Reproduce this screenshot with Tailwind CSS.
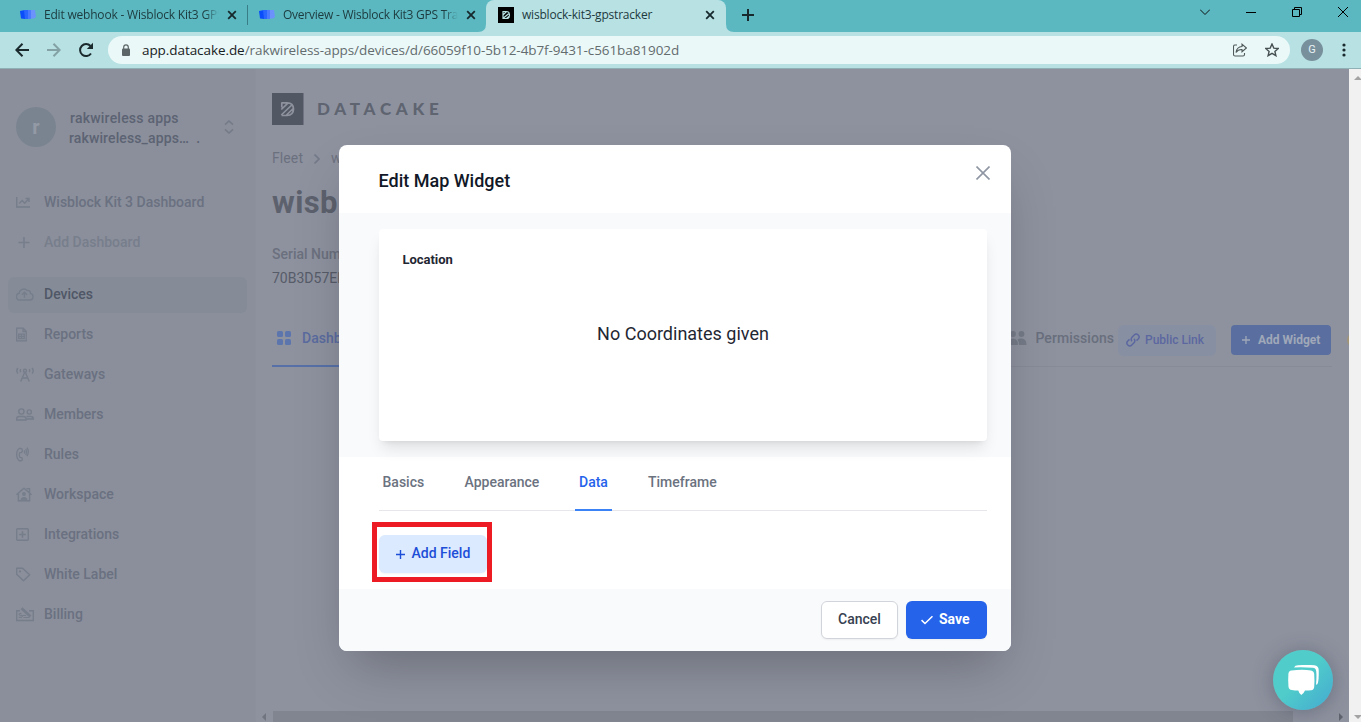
<!DOCTYPE html>
<html lang="en">
<head>
<meta charset="utf-8">
<title>wisblock-kit3-gpstracker</title>
<script src="https://cdn.jsdelivr.net/npm/@tailwindcss/browser@4"></script>
</head>
<body class="h-[722px] w-[1361px] overflow-hidden flex flex-col font-['Roboto',sans-serif] bg-[#8e929f]">

<!-- Tab strip -->
<header class="flex h-8 shrink-0 bg-[#5bb8c1] font-['Open_Sans',sans-serif] text-xs text-[#1d3a3e]">
  <div class="flex w-[247px] items-center pl-5 pb-0.5">
    <svg class="h-4 w-4 shrink-0" viewBox="0 0 16 16"><path d="M0 4l5-1v9l-4-.5z" fill="#0a4dfb"/><path d="M4 3h4v9H5z" fill="#2a67ff"/><path d="M8 3h3v9H8z" fill="#4b7cff"/><path d="M11 3h4l1 7-2 1.500h-3z" fill="#6c92fb"/></svg>
    <span class="ml-2 w-[175px] overflow-hidden whitespace-nowrap tracking-[-0.2px] mask-r-from-92%">Edit webhook - Wisblock Kit3 GPS</span>
    <svg class="ml-2 h-2.5 w-2.5 shrink-0" viewBox="0 0 10 10" stroke="#17292c" stroke-width="1.800"><path d="M1.200 1.200l7.600 7.600M8.800 1.200L1.200 8.800"/></svg>
  </div>
  <div class="mt-[5px] h-5 w-px bg-[#397e86]"></div>
  <div class="flex w-[238px] items-center pl-[11px] pb-0.5">
    <svg class="h-4 w-4 shrink-0" viewBox="0 0 16 16"><path d="M0 4l5-1v9l-4-.5z" fill="#0a4dfb"/><path d="M4 3h4v9H5z" fill="#2a67ff"/><path d="M8 3h3v9H8z" fill="#4b7cff"/><path d="M11 3h4l1 7-2 1.500h-3z" fill="#6c92fb"/></svg>
    <span class="ml-2 w-[175px] overflow-hidden whitespace-nowrap tracking-[-0.25px] mask-r-from-92%">Overview - Wisblock Kit3 GPS Tra</span>
    <svg class="ml-2 h-2.5 w-2.5 shrink-0" viewBox="0 0 10 10" stroke="#17292c" stroke-width="1.800"><path d="M1.200 1.200l7.600 7.600M8.800 1.200L1.200 8.800"/></svg>
  </div>
  <div class="relative flex w-[240px] items-center rounded-t-lg bg-[#b8e1e4] pl-3 pb-0.5">
    <svg class="absolute -left-2 bottom-0 h-2 w-2" viewBox="0 0 8 8"><path d="M8 0v8H0q8 0 8-8z" fill="#b8e1e4"/></svg>
    <svg class="absolute -right-2 bottom-0 h-2 w-2" viewBox="0 0 8 8"><path d="M0 0v8h8q-8 0-8-8z" fill="#b8e1e4"/></svg>
    <svg class="h-4 w-4 shrink-0" viewBox="0 0 16 16" fill="none" stroke="#b8e1e4"><path d="M0 0h16v16H0z" fill="#000" stroke="none"/><path d="M5 4.500h3.500q3 0 3 3.500t-3 3.500H5zM5 8l3.500-3.500M5.500 11l6-5M8.500 11.500L11.500 9" stroke-width="1.200"/></svg>
    <span class="ml-2 w-[175px] whitespace-nowrap tracking-[-0.2px]">wisblock-kit3-gpstracker</span>
    <svg class="ml-2 h-2.5 w-2.5 shrink-0" viewBox="0 0 10 10" stroke="#17292c" stroke-width="1.800"><path d="M1.200 1.200l7.600 7.600M8.800 1.200L1.200 8.800"/></svg>
  </div>
  <svg class="ml-4 mt-[9px] h-3 w-3" viewBox="0 0 12 12" stroke="#17292c" stroke-width="2"><path d="M0 6h12M6 0v12"/></svg>
  <div class="ml-auto flex h-[24px] items-center gap-9 pr-[13px]">
    <svg class="h-2.5 w-2.5" viewBox="0 0 10 10" fill="none" stroke="#111"><path d="M0 2.500l5 5 5-5"/></svg>
    <svg class="h-2.5 w-2.5" viewBox="0 0 10 10" fill="none" stroke="#000"><path d="M0 5.500h10"/></svg>
    <svg class="h-2.5 w-2.5" viewBox="0 0 10 10" fill="none" stroke="#000"><path d="M.5 2.500h7v7h-7zM2.500 2.500v-2h7v7h-2"/></svg>
    <svg class="h-2.5 w-2.5" viewBox="0 0 10 10" fill="none" stroke="#000"><path d="M0 0l10 10M10 0L0 10"/></svg>
  </div>
</header>

<!-- Toolbar -->
<div class="flex h-[37px] shrink-0 items-center border-b border-[#8fb0b5] bg-[#b8e1e4] pl-[15px]">
  <svg class="h-3.5 w-3.5" viewBox="0 0 14 14" fill="none" stroke="#1b2a2d" stroke-width="2"><path d="M14 7H1.500M7.500.7L1.300 7l6.200 6.300"/></svg>
  <svg class="ml-[18px] h-3.5 w-3.5" viewBox="0 0 14 14" fill="none" stroke="#84a2a5" stroke-width="2"><path d="M0 7h12.500M6.500.7L12.700 7l-6.200 6.300"/></svg>
  <svg class="ml-[17px] h-4 w-4" viewBox="0 0 16 16"><path d="M13 11.500A6 6 0 1 1 12.500 4" fill="none" stroke="#1b2a2d" stroke-width="2"/><path d="M15 .8V7H8.800z" fill="#1b2a2d"/></svg>
  <div class="ml-3.5 flex h-7 w-[1182px] items-center rounded-full bg-[#ebf8f8] pl-3.5">
    <svg class="h-3 w-2" viewBox="0 0 8 12"><rect y="4.500" width="8" height="7.500" rx="1" fill="#5b6567"/><path d="M1.700 5V3.200a2.300 2.300 0 0 1 4.600 0V5" fill="none" stroke="#5b6567" stroke-width="1.200"/></svg>
    <span class="ml-3 whitespace-nowrap font-['Open_Sans',sans-serif] text-[13.500px] tracking-[-0.07px] text-[#636c6e]"><span class="text-[#172123]">app.datacake.de</span>/rakwireless-apps/devices/d/66059f10-5b12-4b7f-9431-c561ba81902d</span>
    <svg class="ml-auto h-3.5 w-3.5" viewBox="0 0 14 14" fill="none" stroke="#50595b" stroke-width="1.100"><path d="M4 2H2q-1.500 0-1.500 1.500v8Q.5 13 2 13h8q1.500 0 1.500-1.500V10"/><path d="M9 1.200L13.400 5 9 8.700V6.500Q5 6.300 3 9.500 3.700 4 9 3.500z"/></svg>
    <svg class="ml-[18px] mr-[11px] h-3.5 w-3.5" viewBox="0 0 14 14" fill="none" stroke="#465052" stroke-width="1.400"><path d="M7 1l1.800 4.100 4.400.4-3.300 2.900 1 4.300L7 10.400l-3.900 2.300 1-4.300L.8 5.500l4.400-.4z"/></svg>
  </div>
  <div class="ml-[11px] flex h-[22px] w-[22px] items-center justify-center rounded-full bg-[#78909c] text-[11px] text-[#e9f2f4]">G</div>
  <svg class="ml-[19px] h-3.5 w-1" viewBox="0 0 4 14" fill="#1b2a2d"><circle cx="2" cy="2" r="1.600"/><circle cx="2" cy="7" r="1.600"/><circle cx="2" cy="12" r="1.600"/></svg>
</div>

<!-- Page viewport -->
<div class="flex h-[653px]">
  <div class="relative flex w-[1349px] overflow-hidden">

    <!-- Sidebar -->
    <aside class="flex w-64 shrink-0 flex-col border-r border-[#8c909d] bg-[#8b8f9b] px-2 pt-[38px] text-sm font-medium text-[#6a7181]">
      <div class="flex h-10 items-center pl-2">
        <div class="flex h-10 w-10 items-center justify-center rounded-full bg-[#7a8491] text-xl font-bold text-[#949aa5]">r</div>
        <div class="ml-3.5 mt-0.5 w-[132px] whitespace-nowrap leading-5 text-[#5c6373]">
          <div class="tracking-[0.22px]">rakwireless apps</div>
          <div class="-ml-px tracking-[0.12px]">rakwireless_apps… &nbsp;.</div>
        </div>
        <svg class="ml-[21px] h-3.5 w-3" viewBox="0 0 12 14" fill="none" stroke="#757b89" stroke-width="1.600"><path d="M2 4.700l4-3.700 4 3.700M2 9.300L6 13l4-3.700"/></svg>
      </div>
      <nav class="mt-[37px] flex flex-col gap-1">
        <a class="flex h-9 items-center pl-2"><span class="w-7 text-[#767d8b]"><svg class="h-4 w-4" viewBox="0 0 16 16" fill="none" stroke="currentColor" stroke-width="1.400"><path d="M.7 3v10H14M3.200 9.500l3-3 2.500 2.800 4-4.500M9.500 4.500H13V8"/></svg></span>Wisblock Kit 3 Dashboard</a>
        <a class="flex h-9 items-center pl-2 text-[#777e8c]"><span class="w-7"><svg class="h-4 w-4" viewBox="0 0 16 16" fill="none" stroke="currentColor" stroke-width="1.600"><path d="M2.500 8.500h11M8 3v11"/></svg></span>Add Dashboard</a>
      </nav>
      <nav class="mt-4 flex flex-col gap-1">
        <a class="flex h-9 items-center"><span class="mt-px flex h-9 grow items-center rounded-md bg-[#858c98] pb-0.5 pl-2 text-[#505766]"><span class="w-7 text-[#767d8b]"><svg class="h-[18px] w-[18px]" viewBox="0 0 18 18" fill="none" stroke="currentColor" stroke-width="1.400"><path d="M4.500 15h9.300a3.300 3.300 0 0 0 .7-6.500 2.800 2.800 0 0 0-3.400-3A4.600 4.600 0 0 0 3.200 8.300 3.400 3.400 0 0 0 4.500 15zM8.500 12.700V7.500M6 9.800l2.500-2.500L11 9.800"/></svg></span>Devices</span></a>
        <a class="flex h-9 items-center pl-2"><span class="w-7 text-[#767d8b]"><svg class="h-4 w-[18px]" viewBox="0 0 18 16" fill="none" stroke="currentColor" stroke-width="1.300"><path d="M.7 2.200h6.500l3 3v9.600H.7zM7 2v3.500h3M2.700 8.200h5.600v4.500H2.700zM2.700 10.500h5.600M5.500 8v4.700"/></svg></span>Reports</a>
        <a class="flex h-9 items-center pl-2"><span class="w-7 text-[#767d8b]"><svg class="h-4 w-[18px]" viewBox="0 0 18 16" fill="none" stroke="currentColor" stroke-width="1.400"><path d="M1.900 2q-2.200 2.700 0 5.500M16.100 2q2.200 2.700 0 5.500M4.800 3.200q-1 1.500 0 3M13.200 3.200q1 1.500 0 3M8.600 6.500L4.700 15.500M9.400 6.500l3.900 9M6.300 12h5.400"/><circle cx="9" cy="4.800" r="1.500"/></svg></span>Gateways</a>
        <a class="flex h-9 items-center pl-2"><span class="w-7 text-[#767d8b]"><svg class="h-4 w-[18px]" viewBox="0 0 18 16" fill="none" stroke="currentColor" stroke-width="1.400"><circle cx="5.400" cy="5.500" r="2.600"/><circle cx="13.300" cy="6" r="2.100"/><path d="M.7 14v-1.200q0-2.300 2.500-2.300h4.400q2.400 0 2.400 2.300V14zM10.500 10.500h4.300q2.500 0 2.500 2.500H10.500"/></svg></span>Members</a>
        <a class="flex h-9 items-center pl-2"><span class="w-7 text-[#767d8b]"><svg class="h-4 w-[18px]" viewBox="0 0 18 16" fill="none" stroke="currentColor" stroke-width="1.300"><path d="M3.500 2.300Q.7 4 .7 8.500t3 6.500l2.300-.5q.7-1.500-.2-3l-2-.2q-1-2.500 0-4.800l1.900-.2q1.200-1.700.2-3.500zM8.200 4.300q1 1.600 0 3.200M9.800 3q1.500 3 0 6M11 1.700q2.600 4.200 0 8.400"/></svg></span>Rules</a>
        <a class="flex h-9 items-center pl-2"><span class="w-7 text-[#767d8b]"><svg class="h-4 w-[18px]" viewBox="0 0 18 16" fill="none" stroke="currentColor" stroke-width="1.400"><path d="M.5 8.800L8 2.200l7.500 6.600M2.400 7.500v7.300h11.200V7.500M10.500 2.600h3v3.800"/><circle cx="8" cy="8" r="1.900" fill="currentColor" stroke="none"/><path d="M4.500 15q0-4 3.500-4t3.500 4z" fill="currentColor" stroke="none"/></svg></span>Workspace</a>
        <a class="flex h-9 items-center pl-2"><span class="w-7 text-[#767d8b]"><svg class="h-4 w-[18px]" viewBox="0 0 18 16" fill="none" stroke="currentColor" stroke-width="1.400"><rect x=".7" y="2.700" width="11.600" height="11.600" rx="1"/><path d="M6.500 5.200v6.600M3.200 8.500h6.600" stroke-width="1.600"/></svg></span>Integrations</a>
        <a class="flex h-9 items-center pl-2"><span class="w-7 text-[#767d8b]"><svg class="h-4 w-[18px]" viewBox="0 0 18 16" fill="none" stroke="currentColor" stroke-width="1.400"><path d="M.7 2.300h5.800l7.200 6.400-6.200 6.100L.7 8.300z" stroke-linejoin="round"/><circle cx="4" cy="5.400" r="1.100" fill="currentColor" stroke="none"/></svg></span>White Label</a>
        <a class="flex h-9 items-center pl-2"><span class="w-7 text-[#767d8b]"><svg class="h-4 w-[18px]" viewBox="0 0 18 16" fill="none" stroke="currentColor" stroke-width="1.400"><path d="M4 4.800H.7v9.700h16.600V4.800H13"/><path d="M5.500 2.200l9 8.300" stroke-width="2.800"/><path d="M5.500 7.500q-2.500-.5-2.500.7t2.300 1.200 0 2H2.800M7 9.500h3M7.500 11.500h6" stroke-width="1.100"/></svg></span>Billing</a>
      </nav>
    </aside>

    <!-- Device page -->
    <main class="flex grow flex-col bg-[#8e929f]">
      <div class="flex grow flex-col pl-4 pt-6">
        <div class="flex h-8 items-center">
          <svg class="h-8 w-8" viewBox="0 0 32 32"><path d="M0 0h31.500v32H0z" fill="#525764"/><g fill="none" stroke="#8e929f" stroke-width="1.700"><path d="M9.500 9.800h5.500q6.500 0 6.500 6.200T15 22.500H9.500M9.300 16.500l6.300-6.200M9.300 22l10.500-10M14.500 22l6.700-6.500M9.800 9.500v5"/></g></svg>
          <span class="-mt-px ml-[13px] font-['Lato',sans-serif] text-[17px] font-black leading-none tracking-[4.750px] text-[#5f6471]">DATACAKE</span>
        </div>
        <div class="mt-[23px] flex h-5 items-center text-sm tracking-[0.1px] text-[#6b707e]">Fleet
          <svg class="mx-2.5 mt-px h-3 w-2" viewBox="0 0 8 12" fill="none" stroke="#747987" stroke-width="1.700"><path d="M1.500 1.500L6 6l-4.500 4.500"/></svg>wi</div>
        <h1 class="mt-[17px] text-[31px] font-bold leading-9 tracking-[0.4px] text-[#5c616d]">wisb</h1>
        <div class="mt-[23px] text-sm font-medium leading-5 text-[#6b707e]">Serial Num</div>
        <div class="mt-1 text-sm leading-5 text-[#575c69]">70B3D57ED</div>
        <div class="mr-[17px] mt-[34px] flex h-[45px] border-b border-[#878b98]">
          <div class="flex h-[45px] w-[104px] items-start border-b-2 border-[#5771a8] pl-[5px] pt-1.5 text-sm font-medium text-[#5a6b9f]">
            <svg class="mt-[3px] h-3.5 w-3.5" viewBox="0 0 14 14" fill="#5c76ad"><rect width="6" height="6" rx="1.500"/><rect x="8" width="6" height="6" rx="1.500"/><rect y="8" width="6" height="6" rx="1.500"/><rect x="8" y="8" width="6" height="6" rx="1.500"/></svg>
            <span class="ml-[11px]">Dashb</span>
          </div>
          <div class="ml-auto flex items-start">
            <svg class="mt-2 h-4 w-[19px]" viewBox="0 0 19 16" fill="#757b88"><circle cx="5" cy="4" r="2.900"/><circle cx="13.500" cy="4" r="2.900"/><path d="M0 15q0-6.500 5-6.500t5 6.500zM11 15q0-3.500-1.500-5.500 1-1 4-1 5 0 5 6.500z"/></svg>
            <span class="ml-2 mt-1.5 text-sm font-medium tracking-[0.05px] text-[#696f7d]">Permissions</span>
            <div class="ml-1 mt-[3px] flex h-[31px] w-[98px] items-center rounded-md bg-[#8790a2] pb-px pl-2 text-xs font-medium text-[#5c67a0]">
              <svg class="mr-[5px] h-3.5 w-3.5" viewBox="0 0 14 14" fill="none" stroke="#5c67a0" stroke-width="1.500"><path d="M6 8.200a2.800 2.800 0 0 1 0-4L8.200 2a2.800 2.800 0 0 1 4 4L10.500 7.600M8 5.800a2.800 2.800 0 0 1 0 4L5.800 12a2.800 2.800 0 0 1-4-4L3.500 6.400"/></svg>Public Link</div>
            <div class="ml-[15px] mt-[3px] flex h-[30px] w-[100px] items-center rounded bg-[#5a6f9f] pl-[11px] text-xs font-bold text-[#a0a8b9]">
              <svg class="mr-2 h-2 w-2" viewBox="0 0 8 8" stroke="#a0a8b9" stroke-width="1.300"><path d="M0 4h8M4 0v8"/></svg>Add Widget</div>
            <div class="-mr-[33px] ml-4 mt-2.5 h-4 w-[18px] shrink-0 rounded-full bg-[#a29476]"></div>
          </div>
        </div>
      </div>
      <!-- Horizontal scrollbar -->
      <div class="flex h-[11px] items-center px-[6px]">
        <svg class="h-2 w-1" viewBox="0 0 4 8" fill="#71757f"><path d="M4 0v8L0 4z"/></svg>
        <div class="ml-[7px] h-[11px] w-[1020px] bg-[#818590]"></div>
        <svg class="ml-auto h-2 w-1" viewBox="0 0 4 8" fill="#5f636d"><path d="M0 0v8l4-4z"/></svg>
      </div>
    </main>

    <!-- Edit Map Widget dialog -->
    <div class="absolute inset-0 flex items-start pl-[339px] pt-[76px]">
      <section class="flex h-[506px] w-[672px] flex-col overflow-hidden rounded-lg bg-white shadow-2xl">
        <div class="flex h-[68px] shrink-0 items-start justify-between pl-[39.500px] pr-[21px]">
          <h2 class="mt-[22px] text-lg font-medium leading-7 text-[#111827]">Edit Map Widget</h2>
          <svg class="mt-[21px] h-3.5 w-3.5" viewBox="0 0 14 14" stroke="#8f96a3" stroke-width="1.600"><path d="M.5.5l13 13M13.500.5l-13 13"/></svg>
        </div>
        <div class="h-[244px] shrink-0 bg-[#f9fafb] pl-10 pr-6 pt-4">
          <div class="flex h-[212px] flex-col rounded bg-white shadow-lg">
            <h3 class="ml-[23.500px] mt-[21px] text-[13px] font-bold leading-5 tracking-[-0.05px] text-[#1f2733]">Location</h3>
            <p class="mt-[50px] text-center text-lg leading-7 text-[#1f2733]">No Coordinates given</p>
          </div>
        </div>
        <div class="ml-10 mr-6 flex h-[54px] shrink-0 border-b border-[#e5e7eb] text-sm font-medium text-[#6b7280]">
          <span class="w-[82px] pl-[3.500px] pt-[15px]">Basics</span>
          <span class="w-[114px] pl-[3.500px] pt-[15px]">Appearance</span>
          <span class="-mb-px w-[37px] border-b-2 border-[#3b82f6] pl-1 pt-[15px] text-[#2563eb]">Data</span>
          <span class="ml-8 pl-1 pt-[15px]">Timeframe</span>
        </div>
        <div class="flex h-[78px] shrink-0 pl-[33px] pt-[11px]">
          <div class="h-[60px] w-[120px] border-[5px] border-[#ed1c24] pl-0.5 pt-2">
            <button class="flex h-[38px] w-[108px] items-center rounded-md bg-[#dbeafe] pb-0.5 pl-[17px] text-sm font-medium text-[#1d4ed8] shadow-xs">
              <svg class="mr-[6.500px] mt-0.5 h-[9px] w-[9px]" viewBox="0 0 9 9" stroke="#1d4ed8" stroke-width="1.400"><path d="M0 4.500h9M4.500 0v9"/></svg>Add Field</button>
          </div>
        </div>
        <div class="flex grow justify-end gap-2 bg-[#f9fafb] pr-6 pt-3">
          <button class="h-[38px] w-[77px] rounded-md border border-[#d1d5db] bg-white pb-0.5 text-sm font-medium text-[#374151] shadow-xs">Cancel</button>
          <button class="flex h-[38px] w-[81px] items-center rounded-md bg-[#2563eb] pb-0.5 pl-[15px] text-sm font-bold text-white shadow-xs">
            <svg class="mr-1.5 mt-0.5 h-3 w-3" viewBox="0 0 12 12" fill="none" stroke="#fff" stroke-width="1.600"><path d="M.5 6.200L4 9.500l7.500-7.300"/></svg>Save</button>
        </div>
      </section>
    </div>

    <!-- Chat launcher -->
    <div class="absolute bottom-3 right-4 flex h-[60px] w-[60px] items-center justify-center rounded-full bg-linear-to-br from-[#50cdca] from-45% to-[#45a9d0] shadow-[0_2px_20px_rgba(40,50,70,0.35)]">
      <svg class="h-[30px] w-8" viewBox="0 0 32 30" fill="#fff"><path d="M7 2.400Q8 .3 11 .3q9-.8 16.500 0 4 .5 4.200 4.500.3 9-.7 13-.5 2-2 2 .8-8 .2-13.500-.3-3.200-3.400-3.500Q16 1.900 7 2.400z"/><path d="M4.500 5.400q11-1.300 19.500 0 3 .5 3.200 3.500.5 7 0 13-.3 3-3 3.300-2.700.3-6.200.4-1.500 3.500-3.700 4.400-2.300-1.500-3-4.400-3.500 0-6.500-.5-3-.3-3.300-3.300-.6-6.500-.1-13 .3-3 3.100-3.400z"/></svg>
    </div>
  </div>

  <!-- Vertical scrollbar -->
  <div class="flex w-3 flex-col items-center justify-between bg-[#f1f1f1] pb-[3px] pl-[5px] pt-[7px]">
    <svg class="h-1 w-2" viewBox="0 0 8 4" fill="#a3a3a3"><path d="M0 4h8L4 0z"/></svg>
    <svg class="h-1 w-2" viewBox="0 0 8 4" fill="#a3a3a3"><path d="M0 0h8L4 4z"/></svg>
  </div>
</div>
</body>
</html>
